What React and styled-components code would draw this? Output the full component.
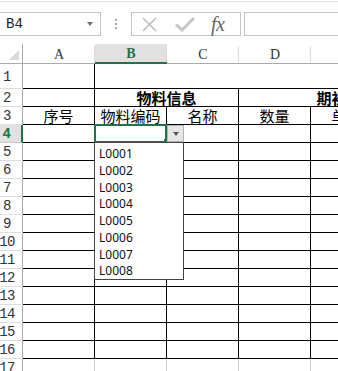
import styled, { createGlobalStyle } from "styled-components";

const GREEN = "#217346";
const GRID = "#d4d4d4";
const LINE = "#000";

const GlobalStyle = createGlobalStyle`
  html, body {
    margin: 0;
    padding: 0;
    background: #fff;
    overflow: hidden;
  }
  body {
    font-family: "Noto Sans", sans-serif;
  }
`;

const Page = styled.div`
  width: 338px;
  height: 371px;
  overflow: hidden;
  position: relative;
`;

const Shifted = styled.div`
  margin-left: -8px;
  width: 460px;
`;

const TopRule = styled.div`
  height: 1px;
  margin-top: 1px;
  background: #dcdcdc;
`;

const FormulaBar = styled.div`
  display: flex;
  align-items: center;
  height: 24px;
  margin-top: 10px;
  margin-bottom: 8px;
`;

const NameBox = styled.div`
  box-sizing: border-box;
  width: 109px;
  height: 24px;
  border: 1px solid #c6c6c6;
  display: flex;
  align-items: center;
  justify-content: space-between;
  padding: 0 7px 0 13px;
  font-family: "Liberation Mono", monospace;
  font-size: 14px;
  color: #222;
`;

const Caret = styled.span`
  width: 0;
  height: 0;
  border-left: 3.5px solid transparent;
  border-right: 3.5px solid transparent;
  border-top: 4px solid #6d6d6d;
`;

const Dots = styled.div`
  width: 2px;
  margin: 0 14px 0 14px;
  display: flex;
  flex-direction: column;
  gap: 2px;
  span {
    width: 2px;
    height: 2px;
    background: #a8a8a8;
  }
`;

const ButtonBox = styled.div`
  box-sizing: border-box;
  width: 110px;
  height: 24px;
  border: 1px solid #c6c6c6;
  display: flex;
  align-items: center;
  padding-left: 9px;
`;

const IconSlot = styled.div`
  width: ${(p) => p.$w}px;
  display: flex;
  align-items: center;
`;

const Fx = styled.span`
  font-family: "Liberation Serif", serif;
  font-style: italic;
  font-size: 20px;
  color: #666;
  letter-spacing: -0.5px;
  line-height: 1;
`;

const FormulaInput = styled.div`
  box-sizing: border-box;
  flex: 1;
  height: 24px;
  margin-left: 3px;
  border: 1px solid #c6c6c6;
`;

const SheetWrap = styled.div`
  position: relative;
`;

const Sheet = styled.div`
  display: grid;
  grid-template-columns: 31px repeat(6, 72px);
  grid-template-rows: 20px 25px repeat(16, 18px);
`;

const Cell = styled.div`
  box-sizing: border-box;
  grid-column: ${(p) => p.$col || "auto"};
  border-right: 1px solid ${(p) => p.$right || GRID};
  border-bottom: 1px solid ${(p) => p.$bottom || GRID};
  display: flex;
  align-items: center;
  justify-content: center;
  font-family: "Noto Sans CJK SC", sans-serif;
  font-size: 15px;
  font-weight: ${(p) => (p.$bold ? 700 : 400)};
  color: #000;
  white-space: nowrap;
  line-height: 1;
`;

const ColHead = styled.div`
  box-sizing: border-box;
  position: relative;
  background: ${(p) => (p.$active ? "#e1e1e1" : "#fff")};
  border-bottom: ${(p) => (p.$active ? `2px solid ${GREEN}` : "1px solid #ababab")};
  display: flex;
  align-items: center;
  justify-content: center;
  font-family: "Liberation Serif", serif;
  font-size: 14px;
  font-weight: ${(p) => (p.$active ? 700 : 400)};
  color: ${(p) => (p.$active ? GREEN : "#333")};
  padding-top: 2px;
  &::after {
    content: "";
    position: absolute;
    right: 0;
    top: 2px;
    bottom: 0;
    width: 1px;
    background: #dadada;
  }
`;

const Corner = styled.div`
  box-sizing: border-box;
  border-right: 1px solid #ababab;
  border-bottom: 1px solid #ababab;
  display: flex;
  align-items: flex-end;
  justify-content: flex-end;
  padding: 0 3px 3px 0;
`;

const RowHead = styled.div`
  box-sizing: border-box;
  background: ${(p) => (p.$active ? "#e1e1e1" : "#fff")};
  border-right: ${(p) => (p.$active ? `2px solid ${GREEN}` : "1px solid #ababab")};
  border-bottom: 1px solid ${(p) => (p.$active ? "#c6c6c6" : "#dedede")};
  display: flex;
  align-items: center;
  justify-content: center;
  padding-top: 1px;
  font-family: "Liberation Mono", monospace;
  font-size: 14px;
  font-weight: ${(p) => (p.$active ? 700 : 400)};
  color: ${(p) => (p.$active ? GREEN : "#333")};
  letter-spacing: -0.6px;
`;

const Selection = styled.div`
  position: absolute;
  left: 102px;
  top: 80px;
  width: 73px;
  height: 19px;
  box-sizing: border-box;
  border: 2px solid ${GREEN};
  pointer-events: none;
`;

const Handle = styled.div`
  position: absolute;
  left: 172px;
  top: 95px;
  width: 3px;
  height: 3px;
  background: ${GREEN};
`;

const DropButton = styled.div`
  position: absolute;
  left: 175px;
  top: 81px;
  width: 17px;
  height: 17px;
  box-sizing: border-box;
  background: #e6e6e6;
  border: 1px solid #b4b4b4;
  display: flex;
  align-items: center;
  justify-content: center;
  span {
    width: 0;
    height: 0;
    border-left: 3.5px solid transparent;
    border-right: 3.5px solid transparent;
    border-top: 4px solid #555;
  }
`;

const DropList = styled.ul`
  position: absolute;
  left: 102px;
  top: 98px;
  width: 90px;
  height: 138px;
  box-sizing: border-box;
  margin: 0;
  padding: 2px 0 0 4px;
  list-style: none;
  background: #fff;
  border: 1px solid #444;
  display: flex;
  flex-direction: column;
`;

const DropItem = styled.li`
  height: 16.8px;
  display: flex;
  align-items: center;
  font-family: "Noto Sans", sans-serif;
  font-size: 12px;
  color: #111;
`;

const columns = ["A", "B", "C", "D", "E", "F"];
const items = ["L0001", "L0002", "L0003", "L0004", "L0005", "L0006", "L0007", "L0008"];
const header3 = ["序号", "物料编码", "名称", "数量", "单价", ""];

const XIcon = () => (
  <svg width="17" height="17" viewBox="0 0 17 17">
    <path d="M2 2 L15 15 M15 2 L2 15" stroke="#bdbdbd" strokeWidth="1.6" fill="none" />
  </svg>
);

const CheckIcon = () => (
  <svg width="20" height="16" viewBox="0 0 20 16">
    <path d="M1 8.5 L7 14 L19 2" stroke="#c4c4c4" strokeWidth="3" fill="none" />
  </svg>
);

const CornerMark = () => (
  <svg width="10" height="10" viewBox="0 0 10 10">
    <polygon points="10,0 10,10 0,10" fill="#d9d9d9" />
  </svg>
);

const App = () => {
  const bodyRows = [];
  for (let r = 4; r <= 17; r++) {
    const closed = r <= 16;
    bodyRows.push(
      <RowHead key={`h${r}`} $active={r === 4}>
        {r}
      </RowHead>
    );
    columns.forEach((c) => {
      bodyRows.push(
        <Cell
          key={`${c}${r}`}
          $right={closed ? LINE : GRID}
          $bottom={closed ? LINE : GRID}
        />
      );
    });
  }

  return (
    <Page>
      <GlobalStyle />
      <Shifted>
        <TopRule />
        <FormulaBar>
          <NameBox>
            B4
            <Caret />
          </NameBox>
          <Dots>
            <span />
            <span />
            <span />
          </Dots>
          <ButtonBox>
            <IconSlot $w={34}>
              <XIcon />
            </IconSlot>
            <IconSlot $w={36}>
              <CheckIcon />
            </IconSlot>
            <IconSlot $w={24}>
              <Fx>fx</Fx>
            </IconSlot>
          </ButtonBox>
          <FormulaInput />
        </FormulaBar>

        <SheetWrap>
          <Sheet>
            <Corner>
              <CornerMark />
            </Corner>
            {columns.map((c) => (
              <ColHead key={c} $active={c === "B"}>
                {c === "F" ? "" : c}
              </ColHead>
            ))}

            <RowHead>1</RowHead>
            <Cell $right={LINE} $bottom={LINE} />
            <Cell $col="span 5" $right="transparent" $bottom={LINE} />

            <RowHead>2</RowHead>
            <Cell $right={LINE} $bottom={LINE} />
            <Cell $col="span 2" $right={LINE} $bottom={LINE} $bold>
              物料信息
            </Cell>
            <Cell $col="span 3" $right={LINE} $bottom={LINE} $bold>
              期初库存
            </Cell>

            <RowHead>3</RowHead>
            {header3.map((t, i) => (
              <Cell key={i} $right={LINE} $bottom={LINE}>
                {t}
              </Cell>
            ))}

            {bodyRows}
          </Sheet>

          <Selection />
          <Handle />
          <DropButton>
            <span />
          </DropButton>
          <DropList>
            {items.map((it) => (
              <DropItem key={it}>{it}</DropItem>
            ))}
          </DropList>
        </SheetWrap>
      </Shifted>
    </Page>
  );
};

export default App;
